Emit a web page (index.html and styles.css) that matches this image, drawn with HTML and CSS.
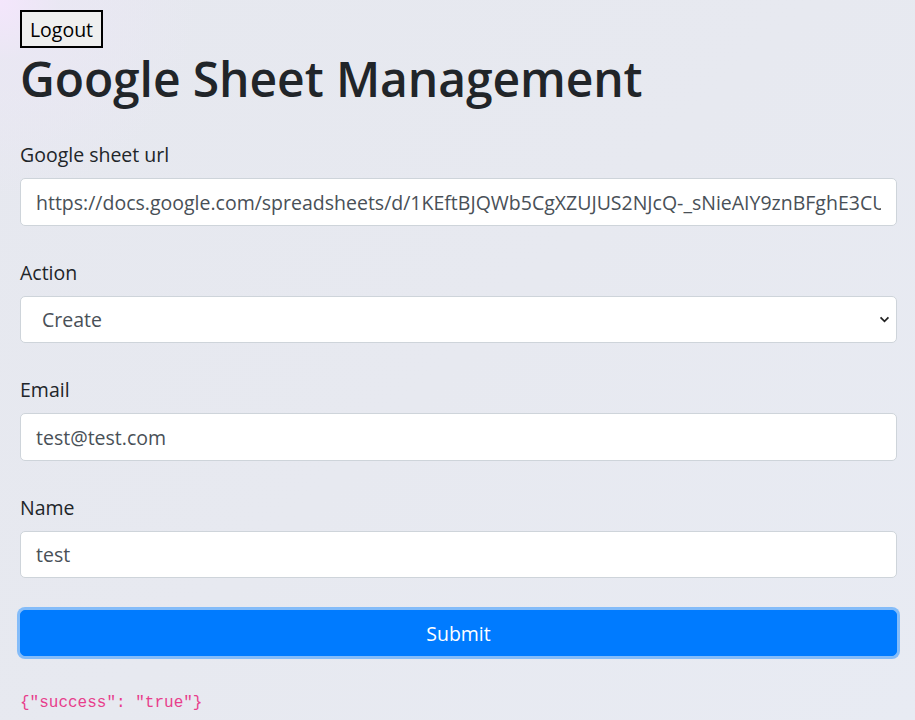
FILE: index.html
```html
<!DOCTYPE html>
<html lang="en">
<head>
<meta charset="utf-8">
<title>Google Sheet Management</title>
<link rel="stylesheet" href="styles.css">
</head>
<body>
<div class="page">
  <button class="logout" type="button">Logout</button>
  <h1 class="title">Google Sheet Management</h1>
  <form class="form">
    <div class="group">
      <label class="label" for="url">Google sheet url</label>
      <input class="control" id="url" type="text" value="https://docs.google.com/spreadsheets/d/1KEftBJQWb5CgXZUJUS2NJcQ-_sNieAIY9znBFghE3CU/edit#gid=0">
    </div>
    <div class="group">
      <label class="label" for="action">Action</label>
      <select class="control select" id="action">
        <option>Create</option>
        <option>Update</option>
        <option>Delete</option>
      </select>
    </div>
    <div class="group">
      <label class="label" for="email">Email</label>
      <input class="control" id="email" type="text" value="test@test.com">
    </div>
    <div class="group">
      <label class="label" for="name">Name</label>
      <input class="control" id="name" type="text" value="test">
    </div>
    <button class="submit" type="button">Submit</button>
  </form>
  <code class="result">{"success": "true"}</code>
</div>
</body>
</html>
```

FILE: styles.css
```css
* { box-sizing: border-box; }

html, body {
  margin: 0;
  height: 100%;
}

body {
  font-family: "Open Sans", "Noto Sans", sans-serif;
  font-size: 19.5px;
  color: #212529;
  background:
    radial-gradient(circle at 0 0, #f4e6fc 0, rgba(236, 231, 246, 0.6) 60px, rgba(230, 232, 239, 0) 200px),
    linear-gradient(135deg, #e6e8ef 0%, #e7e9f0 50%, #e8ebf3 100%);
  overflow: hidden;
}

.page {
  padding: 10px 18px 0 20px;
  display: flex;
  flex-direction: column;
  align-items: flex-start;
}

.logout {
  font-family: "Open Sans", sans-serif;
  font-size: 19.5px;
  line-height: 25px;
  padding: 4px 6px;
  height: 38px;
  width: 83px;
  border: 2px solid #000;
  border-radius: 0;
  background: #efefef;
  color: #000;
}

.title {
  margin: 0 0 30px 0;
  font-size: 48px;
  font-weight: 600;
  line-height: 62px;
  letter-spacing: -0.1px;
  color: #212529;
}

.form {
  width: 100%;
  display: flex;
  flex-direction: column;
  gap: 32px;
}

.group {
  display: flex;
  flex-direction: column;
}

.label {
  line-height: 30px;
  margin-bottom: 8px;
  color: #212529;
}

.control {
  width: 100%;
  height: 47.5px;
  padding: 1px 15px 0;
  font-family: "Open Sans", sans-serif;
  font-size: 19.5px;
  color: #495057;
  background: #fff;
  border: 1px solid #ced4da;
  border-radius: 5px;
  outline: none;
}

.select {
  appearance: none;
  -webkit-appearance: none;
  padding-left: 21px;
  background-image: url("data:image/svg+xml,%3Csvg xmlns='http://www.w3.org/2000/svg' width='12' height='8' viewBox='0 0 12 8'%3E%3Cpath d='M1.5 1.5 6 6l4.5-4.5' fill='none' stroke='%23222' stroke-width='2'/%3E%3C/svg%3E");
  background-repeat: no-repeat;
  background-position: right 6px center;
  background-size: 11px 7px;
}

.submit {
  width: 100%;
  height: 46px;
  font-family: "Open Sans", sans-serif;
  font-size: 19.5px;
  color: #fff;
  background: #007bff;
  border: 1px solid #007bff;
  border-radius: 5px;
  box-shadow: 0 0 0 3px #84bcf9;
}

.result {
  margin-top: 35px;
  font-family: "Liberation Mono", "DejaVu Sans Mono", monospace;
  font-size: 16px;
  line-height: 24px;
  color: #e83e8c;
}
```
